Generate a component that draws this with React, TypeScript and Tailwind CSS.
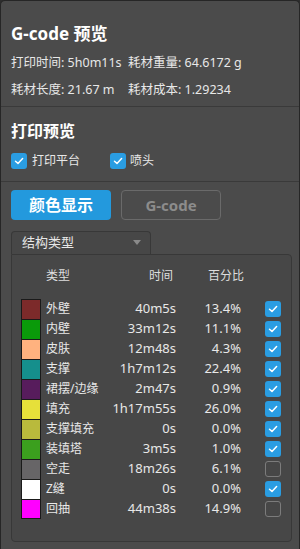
import React from "react";

type Row = { name: string; time: string; pct: string; color: string; on: boolean };

const rows: Row[] = [
  { name: "外壁", time: "40m5s", pct: "13.4%", color: "bg-[#7c2a2a]", on: true },
  { name: "内壁", time: "33m12s", pct: "11.1%", color: "bg-[#0a9a0a]", on: true },
  { name: "皮肤", time: "12m48s", pct: "4.3%", color: "bg-[#ffb27f]", on: true },
  { name: "支撑", time: "1h7m12s", pct: "22.4%", color: "bg-[#158f8c]", on: true },
  { name: "裙摆/边缘", time: "2m47s", pct: "0.9%", color: "bg-[#571c5c]", on: true },
  { name: "填充", time: "1h17m55s", pct: "26.0%", color: "bg-[#e6e03a]", on: true },
  { name: "支撑填充", time: "0s", pct: "0.0%", color: "bg-[#b9ba3c]", on: true },
  { name: "装填塔", time: "3m5s", pct: "1.0%", color: "bg-[#3b9f1e]", on: true },
  { name: "空走", time: "18m26s", pct: "6.1%", color: "bg-[#676567]", on: false },
  { name: "Z缝", time: "0s", pct: "0.0%", color: "bg-white", on: true },
  { name: "回抽", time: "44m38s", pct: "14.9%", color: "bg-[#ff00ff]", on: false },
];

function Check({ on }: { on: boolean }) {
  if (!on) {
    return <div className="w-[16px] h-[16px] rounded-[3px] border border-[#7c7c7c]" />;
  }
  return (
    <div className="w-[16px] h-[16px] rounded-[3px] bg-[#2a9de2] flex items-center justify-center">
      <svg width="10" height="8" viewBox="0 0 10 8" fill="none">
        <path d="M1.5 4.2 L4 6.4 L8.6 1.6" stroke="white" strokeWidth="1.5" strokeLinecap="round" strokeLinejoin="round" />
      </svg>
    </div>
  );
}

export default function App() {
  return (
    <div className="w-[300px] h-[549px] bg-[#2e2e2e] overflow-hidden font-['Noto_Sans','Noto_Sans_CJK_SC',sans-serif] text-[#e8e8e8]">
      <div className="h-full bg-[#4b4b4b] rounded-t-[5px] border-t border-l border-r border-[#262626] flex flex-col">
        {/* G-code summary */}
        <section className="px-[10px] pt-[21px] h-[106px] border-b border-[#3a3a3a]">
          <div className="h-[24px] flex items-center text-[17px] font-bold text-white">G-code 预览</div>
          <div className="h-[27px] mt-[4px] flex items-center text-[12.5px]">
            <span className="w-[117px]">打印时间: 5h0m11s</span>
            <span>耗材重量: 64.6172 g</span>
          </div>
          <div className="h-[27px] flex items-center text-[12.5px]">
            <span className="w-[117px]">耗材长度: 21.67 m</span>
            <span>耗材成本: 1.29234</span>
          </div>
        </section>

        {/* Print preview toggles */}
        <section className="px-[10px] pt-[13px] h-[75px] border-b border-[#3a3a3a]">
          <div className="h-[22px] flex items-center text-[16px] font-bold text-white">打印预览</div>
          <div className="h-[18px] mt-[10px] flex items-center text-[12px]">
            <div className="w-[99px] flex items-center gap-[5px]">
              <Check on />
              <span>打印平台</span>
            </div>
            <div className="flex items-center gap-[4px]">
              <Check on />
              <span>喷头</span>
            </div>
          </div>
        </section>

        {/* Mode buttons */}
        <div className="px-[10px] pt-[8px] flex gap-[10px]">
          <div className="w-[100px] h-[30px] rounded-[4px] bg-[#2399dd] flex items-center justify-center text-[16px] font-bold text-white">
            颜色显示
          </div>
          <div className="w-[100px] h-[30px] rounded-[4px] border border-[#6a6a6a] flex items-center justify-center text-[15px] font-bold text-[#8c8c8c]">
            G-code
          </div>
        </div>

        {/* Legend */}
        <div className="px-[10px] pt-[11px]">
          <div className="w-[140px] h-[23px] rounded-t-[4px] border border-b-0 border-[#383838] bg-[#474747] flex items-center justify-between pl-[10px] pr-[9px] text-[13px]">
            <span>结构类型</span>
            <svg width="8" height="6" viewBox="0 0 8 6">
              <path d="M0 0 L8 0 L4 5 Z" fill="#8a8a8a" />
            </svg>
          </div>
          <div className="w-[281px] h-[288px] rounded-b-[4px] rounded-tr-[4px] border border-[#383838] bg-[#474747] pl-[9px] pt-[11px]">
            <div className="h-[20px] flex items-center text-[12px] text-[#dedede]">
              <span className="w-[85px] pl-[25px]">类型</span>
              <span className="w-[67px] text-right">时间</span>
              <span className="w-[71px] text-right">百分比</span>
            </div>
            <div className="mt-[13px] flex flex-col">
              {rows.map((r, i) => (
                <div key={r.name} className="h-[20px] flex items-center text-[13px]">
                  <div
                    className={`w-[20px] h-[20px] ${r.color} border-x border-t border-[#1a1a1a] ${
                      i === rows.length - 1 ? "border-b" : ""
                    }`}
                  />
                  <span className="w-[65px] pl-[5px] text-[12px]">{r.name}</span>
                  <span className="w-[70px] text-right">{r.time}</span>
                  <span className="w-[65px] text-right">{r.pct}</span>
                  <div className="ml-[24px]">
                    <Check on={r.on} />
                  </div>
                </div>
              ))}
            </div>
          </div>
        </div>
      </div>
    </div>
  );
}
